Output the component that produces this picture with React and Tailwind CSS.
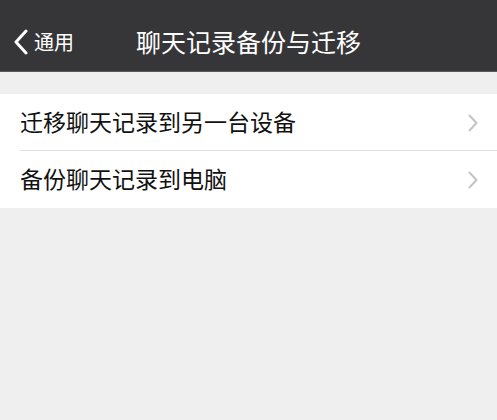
import React from "react";

const font = { fontFamily: '"Noto Sans CJK SC", "Noto Sans", sans-serif' };

const Chevron = ({ className }) => (
  <svg className={className} width="10" height="18" viewBox="0 0 10 18" fill="none">
    <path d="M1.5 1.5 L8.5 9 L1.5 16.5" stroke="currentColor" strokeWidth="2" strokeLinecap="round" strokeLinejoin="round" />
  </svg>
);

const Row = ({ label, divider }) => (
  <div className="flex h-[57px] items-center pl-[20px] pr-[19px] relative">
    <span className="flex-1 text-[23px] text-[#111] leading-none -mt-[2px]">{label}</span>
    <Chevron className="text-[#c4c4c8]" />
    {divider && <div className="absolute bottom-0 left-[20px] right-0 h-px bg-[#e2e2e2]" />}
  </div>
);

export default function App() {
  return (
    <div className="w-[497px] h-[420px] bg-[#efeff0] overflow-hidden" style={font}>
      <div className="h-[72px] bg-[#363638] border-b border-[#5a5a5c] relative flex items-center">
        <div className="flex items-center pl-[13px] pt-[12px] text-white">
          <svg width="16" height="26" viewBox="0 0 16 26" fill="none">
            <path d="M13 2 L3 13 L13 24" stroke="white" strokeWidth="3" strokeLinecap="round" strokeLinejoin="round" />
          </svg>
          <span className="ml-[5px] text-[20px] leading-none">通用</span>
        </div>
        <div className="absolute inset-0 flex items-center justify-center pt-[11px]">
          <span className="text-white text-[25px] leading-none">聊天记录备份与迁移</span>
        </div>
      </div>
      <div className="mt-[22px] bg-white">
        <Row label="迁移聊天记录到另一台设备" divider />
        <Row label="备份聊天记录到电脑" />
      </div>
    </div>
  );
}
